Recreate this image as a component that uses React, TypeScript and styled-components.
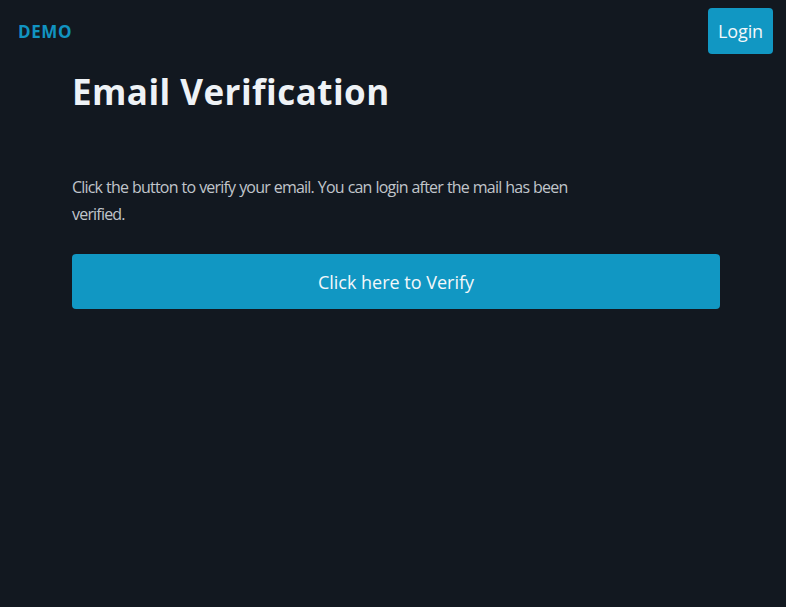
import React from "react";
import styled, { createGlobalStyle } from "styled-components";

const GlobalStyle = createGlobalStyle`
  html, body {
    margin: 0;
    padding: 0;
    background: #121820;
  }
  body {
    font-family: "Open Sans", "Noto Sans", sans-serif;
    color: #c3c7cc;
  }
  * { box-sizing: border-box; }
`;

const Page = styled.div`
  min-height: 607px;
  background: #121820;
  display: flex;
  flex-direction: column;
`;

const Header = styled.header`
  display: flex;
  align-items: center;
  justify-content: space-between;
  padding: 8px 13px 0 18px;
  height: 54px;
`;

const Brand = styled.div`
  font-family: "Open Sans", sans-serif;
  font-weight: 700;
  font-size: 17px;
  color: #1193c0;
  letter-spacing: 0.6px;
`;

const Button = styled.button<{ $block?: boolean }>`
  border: none;
  border-radius: 4px;
  background: #1197c3;
  color: #f4f7fa;
  font-family: "Open Sans", sans-serif;
  font-size: 18px;
  letter-spacing: ${(p) => (p.$block ? "0" : "-0.1px")};
  cursor: pointer;
  width: ${(p) => (p.$block ? "100%" : "65px")};
  height: ${(p) => (p.$block ? "55px" : "46px")};
  padding: 0;
  display: flex;
  align-items: center;
  justify-content: center;
`;

const Main = styled.main`
  padding: 0 66px 0 72px;
  display: flex;
  flex-direction: column;
`;

const Title = styled.h1`
  margin: 10px 0 0;
  font-family: "Open Sans", sans-serif;
  font-weight: 700;
  font-size: 35px;
  line-height: 56px;
  color: #eef2f6;
  letter-spacing: 0.45px;
`;

const Text = styled.p`
  margin: 54px 0 26px;
  max-width: 500px;
  font-size: 16px;
  line-height: 27px;
  letter-spacing: -0.8px;
  word-spacing: 0.5px;
  color: #c0c5cb;
`;

export default function App() {
  return (
    <>
      <GlobalStyle />
      <Page>
        <Header>
          <Brand>DEMO</Brand>
          <Button>Login</Button>
        </Header>
        <Main>
          <Title>Email Verification</Title>
          <Text>
            Click the button to verify your email. You can login after the mail
            has been verified.
          </Text>
          <Button $block>Click here to Verify</Button>
        </Main>
      </Page>
    </>
  );
}
